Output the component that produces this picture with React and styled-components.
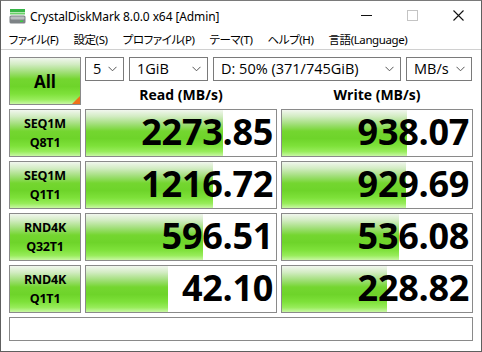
import React from 'react';
import styled, { createGlobalStyle } from 'styled-components';

const GlobalStyle = createGlobalStyle`
  html, body {
    margin: 0;
    padding: 0;
    background: #ffffff;
  }
  * {
    box-sizing: border-box;
  }
`;

const menuItems = ['ファイル(F)', '設定(S)', 'プロファイル(P)', 'テーマ(T)', 'ヘルプ(H)', '言語(Language)'];

const results = [
  { top: 'SEQ1M', bottom: 'Q8T1', read: '2273.85', readPct: 72, write: '938.07', writePct: 66 },
  { top: 'SEQ1M', bottom: 'Q1T1', read: '1216.72', readPct: 67, write: '929.69', writePct: 65 },
  { top: 'RND4K', bottom: 'Q32T1', read: '596.51', readPct: 61.5, write: '536.08', writePct: 61.5 },
  { top: 'RND4K', bottom: 'Q1T1', read: '42.10', readPct: 43, write: '228.82', writePct: 55.5 },
];

const selects = [
  { value: '5', width: 39 },
  { value: '1GiB', width: 79 },
  { value: 'D: 50% (371/745GiB)', width: 188 },
  { value: 'MB/s', width: 66 },
];

function Chevron() {
  return (
    <svg width="9" height="6" viewBox="0 0 9 6">
      <polyline points="0.5,0.8 4.5,4.8 8.5,0.8" fill="none" stroke="#555" strokeWidth="1" />
    </svg>
  );
}

function AppIcon() {
  return (
    <svg width="17" height="17" viewBox="0 0 17 17">
      <rect x="1" y="1" width="15" height="3" fill="#38b548" />
      <rect x="1" y="4.5" width="15" height="2" fill="#6bd06a" />
      <rect x="0.5" y="7.5" width="16" height="8" rx="1.5" fill="#7d8286" />
      <rect x="1.5" y="8.5" width="14" height="3" rx="1" fill="#b9bdc0" />
      <rect x="11" y="12.5" width="3" height="1.5" fill="#37d13f" />
    </svg>
  );
}

export default function App() {
  return (
    <>
      <GlobalStyle />
      <Window>
        <TitleBar>
          <IconSlot>
            <AppIcon />
          </IconSlot>
          <Title>CrystalDiskMark 8.0.0 x64 [Admin]</Title>
          <Controls>
            <ControlButton>
              <svg width="11" height="11" viewBox="0 0 11 11">
                <line x1="0" y1="5.5" x2="11" y2="5.5" stroke="#111" strokeWidth="1" />
              </svg>
            </ControlButton>
            <ControlButton>
              <svg width="11" height="11" viewBox="0 0 11 11">
                <rect x="0.5" y="0.5" width="10" height="10" fill="none" stroke="#c4c4c4" strokeWidth="1" />
              </svg>
            </ControlButton>
            <ControlButton>
              <svg width="11" height="11" viewBox="0 0 11 11">
                <path d="M0.5 0.5 L10.5 10.5 M10.5 0.5 L0.5 10.5" stroke="#111" strokeWidth="1.1" />
              </svg>
            </ControlButton>
          </Controls>
        </TitleBar>
        <MenuBar>
          {menuItems.map((m) => (
            <MenuItem key={m}>{m}</MenuItem>
          ))}
        </MenuBar>
        <Content>
          <Grid>
            <AllButton>
              All
              <Corner />
            </AllButton>
            <TopRight>
              <SelectRow>
                {selects.map((s) => (
                  <Select key={s.value} $width={s.width}>
                    <span>{s.value}</span>
                    <Chevron />
                  </Select>
                ))}
              </SelectRow>
              <HeaderRow>
                <Header>Read (MB/s)</Header>
                <Header>Write (MB/s)</Header>
              </HeaderRow>
            </TopRight>
            {results.map((r) => (
              <React.Fragment key={r.top + r.bottom}>
                <LabelBox>
                  <span>{r.top}</span>
                  <span>{r.bottom}</span>
                </LabelBox>
                <ValueBox>
                  <Bar style={{ width: `${r.readPct}%` }} />
                  <Value>{r.read}</Value>
                </ValueBox>
                <ValueBox>
                  <Bar style={{ width: `${r.writePct}%` }} />
                  <Value>{r.write}</Value>
                </ValueBox>
              </React.Fragment>
            ))}
            <Comment />
          </Grid>
        </Content>
      </Window>
    </>
  );
}

const green = `linear-gradient(
  to bottom,
  #f1f6ee 0%,
  #d2ecc2 14%,
  #a3df7c 30%,
  #74d630 46%,
  #6ed42a 62%,
  #7ee13a 78%,
  #97ec5a 90%,
  #c8f7a4 100%
)`;

const Window = styled.div`
  width: 482px;
  height: 352px;
  display: flex;
  flex-direction: column;
  background: #ffffff;
  border: 1px solid #5f5f5f;
  border-top-color: #7a7a7a;
  font-family: "Open Sans", "Noto Sans CJK JP", sans-serif;
  color: #000;
  overflow: hidden;
`;

const TitleBar = styled.div`
  height: 29px;
  display: flex;
  align-items: center;
  flex-shrink: 0;
`;

const IconSlot = styled.div`
  width: 29px;
  display: flex;
  justify-content: flex-end;
  padding-right: 4px;
  margin-top: 1px;
`;

const Title = styled.div`
  flex: 1;
  font-size: 12px;
  font-family: "Noto Sans", "Noto Sans CJK JP", sans-serif;
  letter-spacing: -0.1px;
  margin-top: 1px;
`;

const Controls = styled.div`
  display: flex;
  height: 100%;
`;

const ControlButton = styled.div`
  width: 46px;
  height: 100%;
  display: flex;
  align-items: center;
  justify-content: center;
`;

const MenuBar = styled.div`
  height: 20px;
  display: flex;
  align-items: center;
  border-bottom: 1px solid #d0d0d0;
  flex-shrink: 0;
`;

const MenuItem = styled.div`
  padding: 0 7.5px;
  font-size: 11.5px;
  letter-spacing: -0.4px;
  font-family: "Noto Sans", "Noto Sans CJK JP", sans-serif;
  font-feature-settings: "palt";
  white-space: nowrap;
  line-height: 16px;
`;

const Content = styled.div`
  flex: 1;
  padding: 7px 8px 0 8px;
`;

const Grid = styled.div`
  display: grid;
  grid-template-columns: 72px 192px 192px;
  grid-template-rows: 48px 48px 48px 48px 48px 24px;
  column-gap: 4px;
  row-gap: 4px;
`;

const AllButton = styled.div`
  position: relative;
  border: 1px solid #8a8a8a;
  background: ${green};
  display: flex;
  align-items: center;
  justify-content: center;
  font-weight: 700;
  font-size: 17px;
  font-family: "Open Sans", sans-serif;
`;

const Corner = styled.div`
  position: absolute;
  right: 0;
  bottom: 0;
  width: 0;
  height: 0;
  border-left: 8px solid transparent;
  border-bottom: 8px solid #f07018;
`;

const TopRight = styled.div`
  grid-column: 2 / 4;
  display: flex;
  flex-direction: column;
`;

const SelectRow = styled.div`
  display: flex;
  gap: 5px;
  height: 24px;
`;

const Select = styled.div`
  width: ${(p) => p.$width}px;
  height: 24px;
  border: 1px solid #7a7a7a;
  background: #fff;
  display: flex;
  align-items: center;
  justify-content: space-between;
  padding: 0 6px 0 7px;
  font-size: 14.5px;
  font-family: "Open Sans", sans-serif;
  white-space: nowrap;

  span {
    margin-top: -1px;
  }
`;

const HeaderRow = styled.div`
  flex: 1;
  display: grid;
  grid-template-columns: 192px 192px;
  column-gap: 4px;
  align-items: center;
`;

const Header = styled.div`
  text-align: center;
  font-weight: 700;
  font-size: 14px;
  padding-top: 3px;
`;

const LabelBox = styled.div`
  border: 1px solid #8a8a8a;
  background: ${green};
  display: flex;
  flex-direction: column;
  align-items: center;
  justify-content: center;
  font-weight: 700;
  font-size: 12.5px;
  line-height: 19px;
  letter-spacing: -0.2px;
`;

const ValueBox = styled.div`
  position: relative;
  border: 1px solid #8a8a8a;
  background: #fff;
  display: flex;
  align-items: center;
  justify-content: flex-end;
`;

const Bar = styled.div`
  position: absolute;
  left: 0;
  top: 0;
  bottom: 0;
  background: ${green};
`;

const Value = styled.div`
  position: relative;
  font-weight: 700;
  font-size: 36px;
  line-height: 42px;
  padding-right: 3px;
  letter-spacing: -0.3px;
  margin-top: -2px;
`;

const Comment = styled.div`
  grid-column: 1 / 4;
  border: 1px solid #8a8a8a;
  background: #fff;
`;
